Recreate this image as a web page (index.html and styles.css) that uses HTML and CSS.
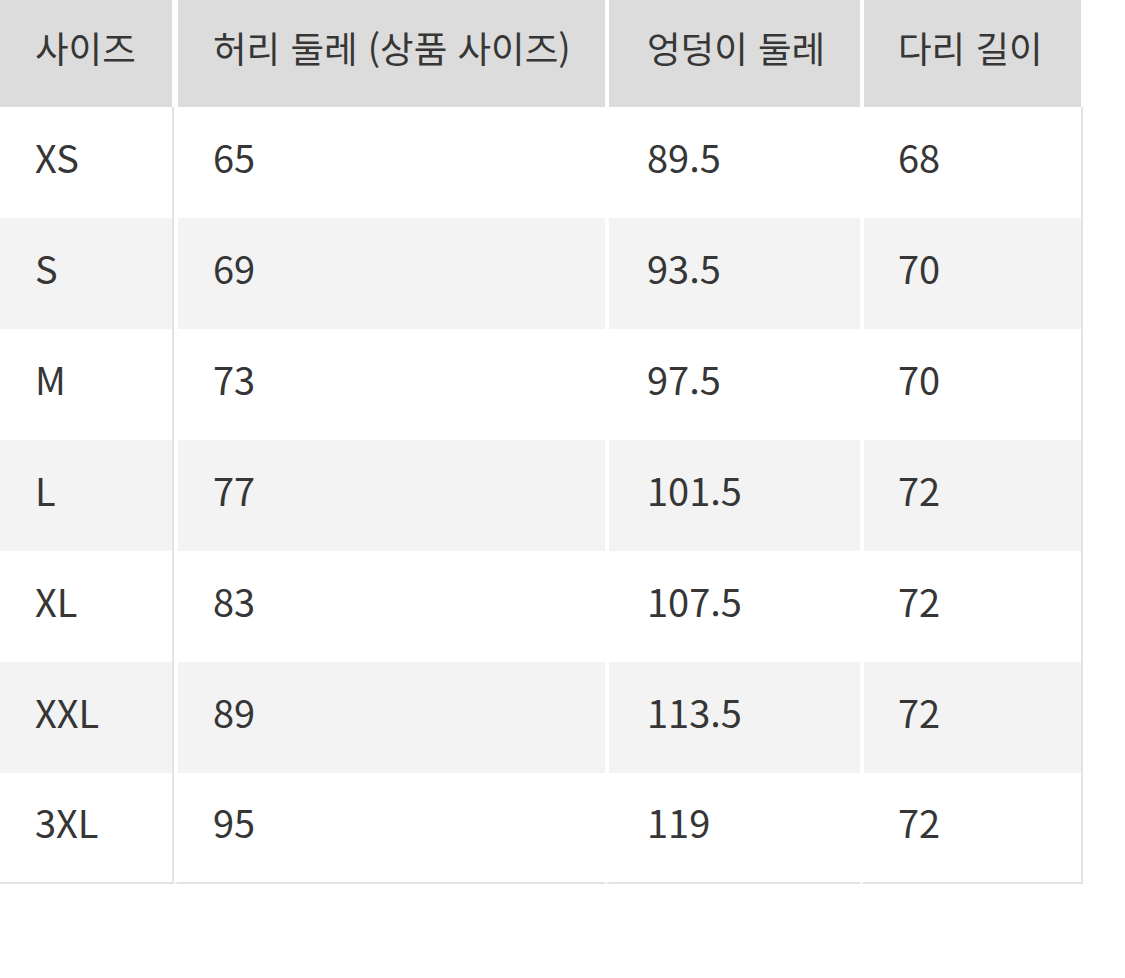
FILE: index.html
```html
<!DOCTYPE html>
<html lang="ko">
<head>
<meta charset="utf-8">
<title>사이즈 표</title>
<link rel="stylesheet" href="styles.css">
</head>
<body>
<table class="size-table">
  <colgroup>
    <col class="c1"><col class="c2"><col class="c3"><col class="c4">
  </colgroup>
  <thead>
    <tr><th>사이즈</th><th>허리 둘레 (상품 사이즈)</th><th>엉덩이 둘레</th><th>다리 길이</th></tr>
  </thead>
  <tbody>
    <tr><td>XS</td><td>65</td><td>89.5</td><td>68</td></tr>
    <tr><td>S</td><td>69</td><td>93.5</td><td>70</td></tr>
    <tr><td>M</td><td>73</td><td>97.5</td><td>70</td></tr>
    <tr><td>L</td><td>77</td><td>101.5</td><td>72</td></tr>
    <tr><td>XL</td><td>83</td><td>107.5</td><td>72</td></tr>
    <tr><td>XXL</td><td>89</td><td>113.5</td><td>72</td></tr>
    <tr><td>3XL</td><td>95</td><td>119</td><td>72</td></tr>
  </tbody>
</table>
</body>
</html>
```

FILE: styles.css
```css
html, body {
  margin: 0;
  padding: 0;
  background: #ffffff;
}

.size-table {
  table-layout: fixed;
  width: 1083px;
  border-collapse: separate;
  border-spacing: 0;
  font-family: "Noto Sans CJK KR", "Noto Sans", sans-serif;
  font-size: 38px;
  color: #363636;
}

.c1 { width: 174px; }
.c2 { width: 431px; }
.c3 { width: 255px; }
.c4 { width: 223px; }

.size-table th,
.size-table td {
  text-align: left;
  font-weight: normal;
  vertical-align: middle;
  padding: 0 0 12px 35px;
  white-space: nowrap;
}

.size-table th {
  height: 95px;
  font-size: 36.5px;
  background: #dcdcdc;
}

.size-table td {
  height: 99px;
  background: #ffffff;
}

.size-table tbody tr:nth-child(even) td {
  background: #f3f3f3;
}

.size-table th:first-child {
  border-right: 2px solid #ffffff;
}

.size-table td:first-child {
  border-right: 2px solid #e3e3e3;
}

.size-table th:nth-child(n+2),
.size-table td:nth-child(n+2) {
  border-left: 4px solid #ffffff;
}

.size-table th:nth-child(3),
.size-table td:nth-child(3) {
  padding-left: 38px;
}

.size-table th:nth-child(4),
.size-table td:nth-child(4) {
  padding-left: 34px;
}

.size-table th:last-child {
  border-right: 2px solid #ffffff;
}

.size-table td:last-child {
  border-right: 2px solid #e3e3e3;
}

.size-table tbody tr:last-child td {
  height: 97px;
  border-bottom: 2px solid #e3e3e3;
}
```
